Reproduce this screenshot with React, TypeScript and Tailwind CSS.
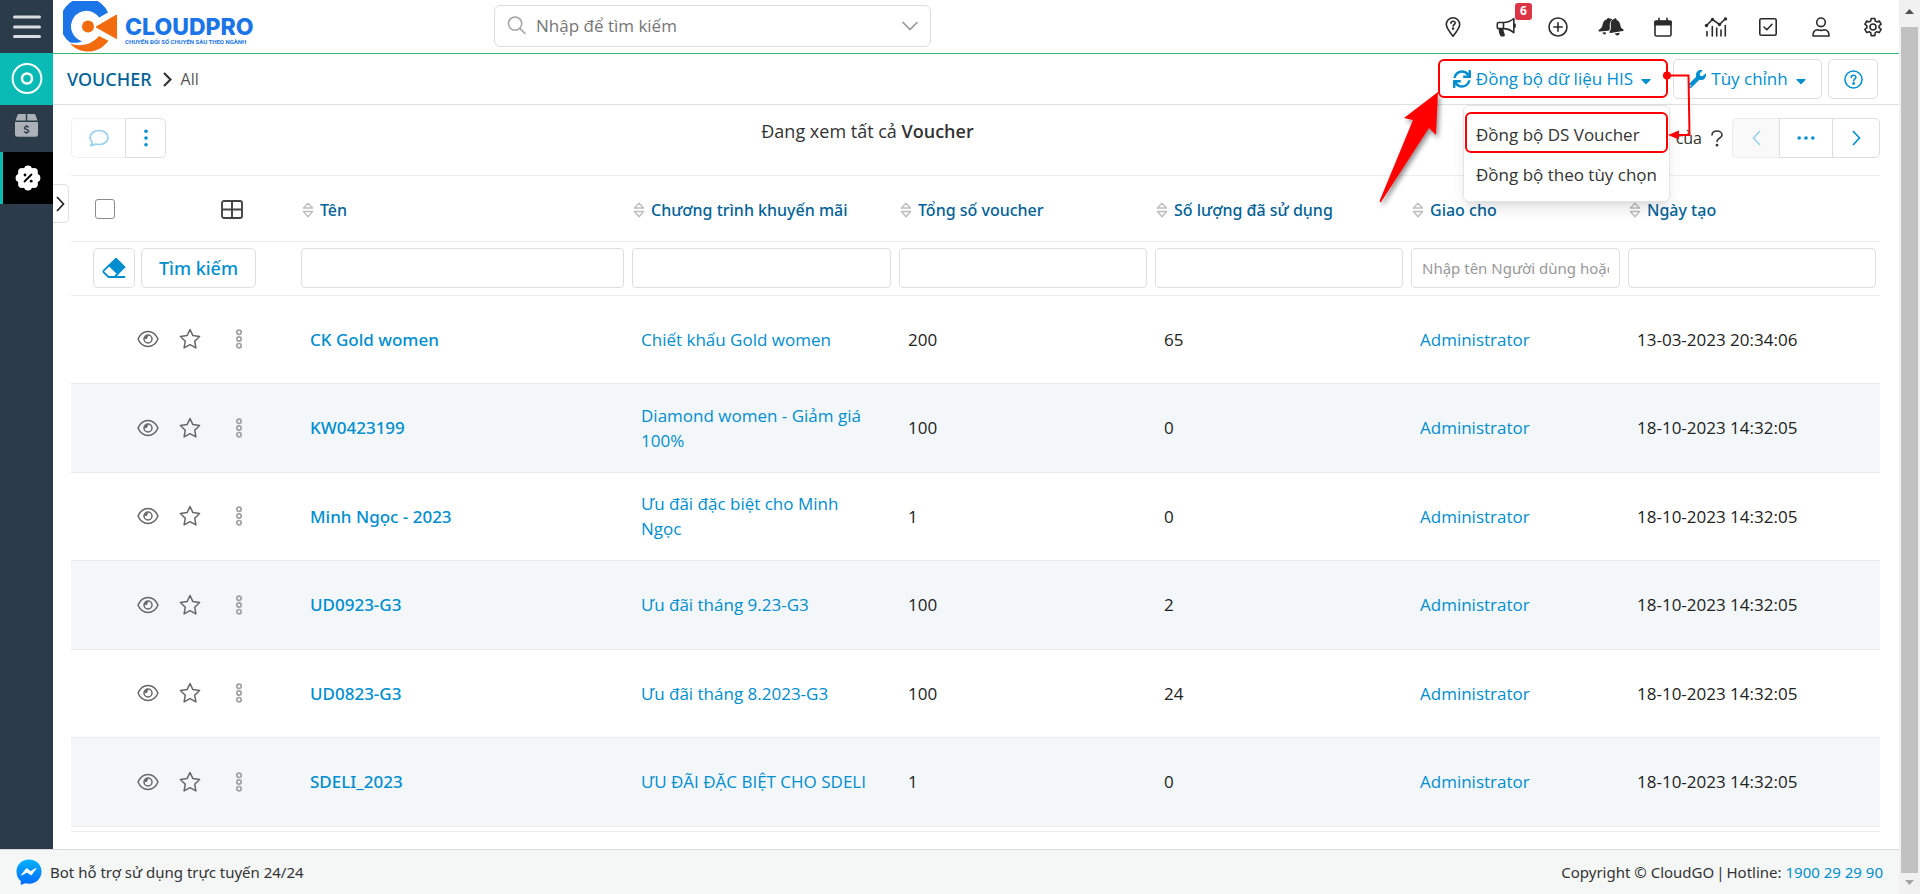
import type { ReactNode } from 'react';
import { FaCaretDown, FaSync, FaWrench } from 'react-icons/fa';

type Voucher = {
  name: string;
  program: string;
  total: number;
  used: number;
  owner: string;
  created: string;
};

const vouchers: Voucher[] = [
  { name: 'CK Gold women', program: 'Chiết khấu Gold women', total: 200, used: 65, owner: 'Administrator', created: '13-03-2023 20:34:06' },
  { name: 'KW0423199', program: 'Diamond women - Giảm giá 100%', total: 100, used: 0, owner: 'Administrator', created: '18-10-2023 14:32:05' },
  { name: 'Minh Ngọc - 2023', program: 'Ưu đãi đặc biệt cho Minh Ngọc', total: 1, used: 0, owner: 'Administrator', created: '18-10-2023 14:32:05' },
  { name: 'UD0923-G3', program: 'Ưu đãi tháng 9.23-G3', total: 100, used: 2, owner: 'Administrator', created: '18-10-2023 14:32:05' },
  { name: 'UD0823-G3', program: 'Ưu đãi tháng 8.2023-G3', total: 100, used: 24, owner: 'Administrator', created: '18-10-2023 14:32:05' },
  { name: 'SDELI_2023', program: 'ƯU ĐÃI ĐẶC BIỆT CHO SDELI', total: 1, used: 0, owner: 'Administrator', created: '18-10-2023 14:32:05' },
];

const columns = [
  { label: 'Tên', width: 'w-[331px]', placeholder: '' },
  { label: 'Chương trình khuyến mãi', width: 'w-[267px]', placeholder: '' },
  { label: 'Tổng số voucher', width: 'w-[256px]', placeholder: '' },
  { label: 'Số lượng đã sử dụng', width: 'w-[256px]', placeholder: '' },
  { label: 'Giao cho', width: 'w-[217px]', placeholder: 'Nhập tên Người dùng hoặc nhóm' },
  { label: 'Ngày tạo', width: 'w-[256px]', placeholder: '' },
];

function Icon({ size = 20, stroke = 1.6, className = '', children }: { size?: number; stroke?: number; className?: string; children: ReactNode }) {
  return (
    <svg width={size} height={size} viewBox="0 0 20 20" fill="none" stroke="currentColor" strokeWidth={stroke} strokeLinecap="round" strokeLinejoin="round" className={className} aria-hidden="true">
      {children}
    </svg>
  );
}

const headerActions: { label: string; badge?: string; icon: ReactNode }[] = [
  {
    label: 'Trợ giúp địa điểm',
    icon: (
      <Icon>
        <path d="M10 19.2C6 14.2 3.3 10.800 3.300 7.500a6.700 6.700 0 0 1 13.400 0C16.700 10.800 14 14.200 10 19.200Z" />
        <path d="M7.900 6.200c.2-2.700 4.500-2.500 4.300 0-.1 1.400-2.100 1.400-2.100 2.900" />
        <circle cx="10.100" cy="11.600" r=".5" fill="currentColor" />
      </Icon>
    ),
  },
  {
    label: 'Thông báo chung',
    badge: '6',
    icon: (
      <Icon>
        <path d="M7.500 5.500H2.500a1.200 1.200 0 0 0-1.200 1.200v3.700a1.200 1.200 0 0 0 1.200 1.200h5M7.500 5.500v6.100M7.500 5.500c4 0 7.500-1.500 10.300-4v14.200c-2.800-2.600-6.300-4.100-10.300-4.100M19 7.200v2.800" />
        <path d="M3.500 11.800h3.200c-.2 2.300.4 4.200 1.300 5.800.2.500 0 1-.5 1H5.200c-1.400-2-1.900-4.300-1.700-6.800Z" fill="currentColor" />
      </Icon>
    ),
  },
  {
    label: 'Thêm nhanh',
    icon: (
      <Icon>
        <circle cx="10" cy="10" r="9" />
        <path d="M10 5.800v8.400M5.800 10h8.400" />
      </Icon>
    ),
  },
  {
    label: 'Thông báo',
    icon: (
      <svg width="26" height="20" viewBox="0 0 26 20" fill="currentColor" aria-hidden="true">
        <path d="M11.500 1.500 11 1.200C9.800.9 9.300 1.300 9 2.200 5.700 3.300 4.800 6 4.400 8.500 4.100 10.600 2.600 11.800.8 13c-.7.600-.4 1.600.5 1.500l9.300-.7c2.300-1.700.8-4.300 1.200-7 .3-1.900 1.200-3.300 2.600-4.300a6.500 6.500 0 0 0-2.900-1Z" />
        <path d="M16.200 2.100c.4-.9 1.200-1.100 2-.5l.3 1.100c3 1.400 3.700 4 4 6.200.2 1.500 1.400 2.500 2.700 3.400.8.600.5 1.600-.4 1.700L12.500 16c-.9.100-1.400-.9-.8-1.600 1.700-2.100 1.200-4.500 1-6.900-.2-2.600 1-4.600 3.500-5.400Z" />
        <path d="M4.300 15.600 7.900 15.300c.3 1.600-.4 2.100-1.300 2.100-1 0-2-.6-2.300-1.800ZM16.800 16.600l4.800-.9c.2 2.900-3.300 4-4.800.9Z" />
      </svg>
    ),
  },
  {
    label: 'Lịch',
    icon: (
      <Icon>
        <rect x="2" y="4" width="16" height="15" rx="1.500" />
        <path d="M2 4.500h16v3.200H2Z" fill="currentColor" />
        <path d="M6 1.300V4M14 1.300V4" />
      </Icon>
    ),
  },
  {
    label: 'Báo cáo',
    icon: (
      <svg width="24" height="20" viewBox="0 0 24 20" fill="none" stroke="currentColor" strokeWidth="1.600" strokeLinecap="round" aria-hidden="true">
        <path d="m2.500 8.500 6-6 7 5 6-6" />
        <path d="M3 14.500V19M8.300 9.500V19M12.700 11V19M17 13V19M21.300 8.500V19" />
        <g fill="currentColor" stroke="none">
          <circle cx="2.500" cy="8.500" r="1.700" />
          <circle cx="8.500" cy="2.500" r="1.700" />
          <circle cx="15.500" cy="7.500" r="1.700" />
          <circle cx="21.500" cy="1.900" r="1.700" />
        </g>
      </svg>
    ),
  },
  {
    label: 'Công việc',
    icon: (
      <Icon>
        <rect x="1.800" y="1.800" width="16.400" height="16.400" rx="1.500" />
        <path d="m6 10 2.800 2.800 5.200-5.500" />
      </Icon>
    ),
  },
  {
    label: 'Tài khoản',
    icon: (
      <Icon>
        <circle cx="10" cy="5.300" r="4.300" />
        <path d="M2 19c-.2-4 1.500-6.200 4.700-6.200 2.200.8 4.400.8 6.600 0 3.200 0 4.900 2.200 4.700 6.200Z" />
      </Icon>
    ),
  },
  {
    label: 'Cài đặt',
    icon: (
      <Icon>
        <path d="M8.200 1.200h3.600l.5 2.500 1.500.9 2.400-.9 1.900 3.200-2 1.700v1.800l2 1.700-1.900 3.200-2.400-.9-1.500.9-.5 3H8.200l-.5-3-1.500-.9-2.400.9-1.900-3.200 2-1.700V8.600l-2-1.700 1.900-3.200 2.400.9 1.500-.9Z" transform="translate(0 .3)" />
        <circle cx="10" cy="10" r="3" />
      </Icon>
    ),
  },
];

function Logo() {
  return (
    <a href="#home" className="flex items-center gap-2 text-[#1b74e8]">
      <svg width="54" height="51" viewBox="0 0 54 51" aria-hidden="true">
        <path d="M45 11.500A25 25 0 1 0 7 41.500c4 .6 9 .5 12-1.300A15.500 15.500 0 1 1 36.200 16.500Z" fill="#1b74e8" />
        <path d="M7 42.500c11 3.800 21.500 1.200 29-7.500l9.500 4.800C35 54 17 53.500 7 42.500Z" fill="#f26c0d" />
        <circle cx="25" cy="25.500" r="6" fill="#f26c0d" />
        <path d="M33 26 53.500 14v23.500Z" fill="#f26c0d" stroke="#f26c0d" strokeLinejoin="round" />
      </svg>
      <span className="flex flex-col pt-2">
        <span className="font-['Inter',sans-serif] text-[23px] font-extrabold leading-[22px]">CLOUDPRO</span>
        <span className="whitespace-nowrap font-['Roboto',sans-serif] text-[6px] font-bold leading-[8px]">CHUYỂN ĐỔI SỐ CHUYÊN SÂU THEO NGÀNH</span>
      </span>
    </a>
  );
}

function Header() {
  return (
    <header className="flex h-[54px] items-center border-b border-[#3cb371] bg-white pl-[10px] pr-[6px]">
      <div className="w-[431px] shrink-0">
        <Logo />
      </div>
      <div className="mb-[2px] flex h-[42px] w-[437px] items-center rounded-md border border-[#dedede] px-3">
        <Icon className="text-[#a3a3a3]" size={19}>
          <circle cx="8.500" cy="8" r="7" />
          <path d="m13.500 13 5.500 5.500" />
        </Icon>
        <input aria-label="Tìm kiếm" placeholder="Nhập để tìm kiếm" className="ml-[10px] min-w-0 flex-1 bg-transparent text-[17px] outline-none placeholder:text-[#757575]" />
        <button aria-label="Mở rộng tìm kiếm" className="text-[#999]">
          <svg width="16" height="10" viewBox="0 0 16 10" fill="none" stroke="currentColor" strokeWidth="1.700" strokeLinecap="round" aria-hidden="true">
            <path d="m1 1.500 7 7 7-7" />
          </svg>
        </button>
      </div>
      <nav className="ml-auto flex gap-[12px] text-[#2b2b2b]">
        {headerActions.map((action) => (
          <button key={action.label} aria-label={action.label} className="relative flex h-8 w-[40px] items-center justify-center even:w-[41px]">
            {action.icon}
            {action.badge && (
              <span className="absolute -top-[8px] left-[30px] flex h-[17px] w-[17px] items-center justify-center rounded-[3px] bg-[#dc3545] text-[12px] font-bold text-white">{action.badge}</span>
            )}
          </button>
        ))}
      </nav>
    </header>
  );
}

function Sidebar() {
  return (
    <aside className="flex w-[53px] shrink-0 flex-col bg-[#2c3b49]">
      <button aria-label="Menu" className="flex h-[53px] items-center justify-center">
        <svg width="28" height="24" viewBox="0 0 28 24" stroke="#d9dce0" strokeWidth="3" strokeLinecap="round" aria-hidden="true">
          <path d="M1.500 2h25M1.500 12h25M1.500 21.500h25" />
        </svg>
      </button>
      <a href="#dashboard" aria-label="Tổng quan" className="flex h-[52px] items-center justify-center bg-[#0abab5] text-white">
        <svg width="32" height="32" viewBox="0 0 32 32" fill="none" stroke="currentColor" aria-hidden="true">
          <circle cx="16" cy="15.500" r="14.400" strokeWidth="2" />
          <circle cx="16" cy="15.500" r="5" strokeWidth="2.500" />
        </svg>
      </a>
      <a href="#products" aria-label="Sản phẩm" className="flex h-[47px] items-center justify-center pb-[6px]">
        <svg width="23" height="23" viewBox="0 0 23 23" aria-hidden="true">
          <path d="M4 0h6.800v6.500H.5L2.500 1.100C2.800.4 3.300 0 4 0ZM12.200 0H19c.7 0 1.200.4 1.500 1.100l2 5.400H12.200ZM0 8h23v12.500a2.300 2.300 0 0 1-2.300 2.300H2.300A2.300 2.300 0 0 1 0 20.500Z" fill="#abb1b6" />
          <path d="M13.500 13.300c-1-1.100-4.200-1-4.200.7 0 1.900 4.400.9 4.400 3 0 1.900-3.500 1.900-4.500.6M11.500 11v1.200M11.500 18.500v1.200" stroke="#2c3b49" strokeWidth="1.400" fill="none" />
        </svg>
      </a>
      <a href="#vouchers" aria-label="Voucher" className="flex h-[52px] items-center justify-center border-l-[3px] border-[#0abab5] bg-black">
        <svg width="26" height="26" viewBox="0 0 26 26" aria-hidden="true">
          <g fill="white">
            <circle cx="13" cy="13" r="10.500" />
            <circle cx="13" cy="4.500" r="3.900" />
            <circle cx="13" cy="21.500" r="3.900" />
            <circle cx="4.500" cy="13" r="3.900" />
            <circle cx="21.500" cy="13" r="3.900" />
            <circle cx="7" cy="7" r="3.900" />
            <circle cx="19" cy="7" r="3.900" />
            <circle cx="7" cy="19" r="3.900" />
            <circle cx="19" cy="19" r="3.900" />
          </g>
          <path d="m9.500 16.500 7-7" stroke="black" strokeWidth="1.800" strokeLinecap="round" />
          <circle cx="10" cy="10" r="1.400" fill="black" />
          <circle cx="16.200" cy="16.200" r="1.400" fill="black" />
        </svg>
      </a>
    </aside>
  );
}

function Callouts() {
  return (
    <svg className="pointer-events-none absolute -left-[69px] -top-[10px] z-30" width="330" height="170" viewBox="1370 49 330 170" aria-hidden="true">
      <defs>
        <filter id="arrow-shadow" x="-20%" y="-20%" width="150%" height="150%">
          <feDropShadow dx="2" dy="3" stdDeviation="2.500" floodColor="#000" floodOpacity="0.450" />
        </filter>
      </defs>
      <path d="M1439 92 1437 135 1430 128 1382 202Q1380 203 1381 200L1414 120 1405 118Z" fill="#fe0000" filter="url(#arrow-shadow)" />
      <g fill="none" stroke="#fe0000" strokeWidth="2">
        <rect x="1440" y="60" width="228" height="37" rx="5" />
        <rect x="1467" y="113" width="201" height="39" rx="5" />
        <path d="M1668 75.500h21.500l1 59.500H1679" />
      </g>
      <circle cx="1668" cy="75.500" r="4" fill="#fe0000" />
      <path d="m1669 135 11-4.500v9Z" fill="#fe0000" />
    </svg>
  );
}

const menuItem = 'block w-full whitespace-nowrap px-[12px] text-left text-[17px] leading-[40px] text-[#333]';

function PageBar() {
  return (
    <div className="flex h-[51px] items-center border-b border-[#dedede] pl-[14px] pr-[21px]">
      <h1 className="font-['Noto_Sans',sans-serif] text-[18px] font-medium text-[#026297]">VOUCHER</h1>
      <svg width="9" height="15" viewBox="0 0 9 15" fill="none" stroke="#333" strokeWidth="2.200" className="ml-[11px] mr-[9px]" aria-hidden="true">
        <path d="m1 1 6.500 6.500L1 14" />
      </svg>
      <span className="text-[16px] text-[#555]">All</span>
      <div className="ml-auto flex gap-[6px] text-[#008ecf]">
        <div className="relative">
          <button className="flex h-[40px] w-[229px] items-center justify-center gap-[5px] whitespace-nowrap pl-[2px] text-[17px]" aria-expanded="true">
            <FaSync className="text-[18px]" />
            Đồng bộ dữ liệu HIS
            <FaCaretDown className="mt-1 text-[16px]" />
          </button>
          <div role="menu" className="absolute left-[25px] top-[46px] z-20 w-[207px] rounded-md border border-[#e4e4e4] bg-white pb-[6px] pt-[9px] shadow-lg">
            <button role="menuitem" className={menuItem}>Đồng bộ DS Voucher</button>
            <button role="menuitem" className={menuItem}>Đồng bộ theo tùy chọn</button>
          </div>
          <Callouts />
        </div>
        <button className="flex h-[40px] w-[149px] items-center justify-center gap-[5px] whitespace-nowrap rounded-[5px] border border-[#dedede] pl-[2px] text-[17px]">
          <FaWrench className="text-[18px]" />
          Tùy chỉnh
          <FaCaretDown className="mt-1 text-[16px]" />
        </button>
        <button aria-label="Hướng dẫn" className="flex h-[40px] w-[50px] items-center justify-center rounded-[5px] border border-[#dedede]">
          <Icon size={19}>
            <circle cx="10" cy="10" r="9" />
            <path d="M7.500 7.800c.2-3.300 5.200-3 5 0-.1 1.700-2.400 1.800-2.400 3.600" />
            <circle cx="10.100" cy="14.200" r=".7" fill="currentColor" />
          </Icon>
        </button>
      </div>
    </div>
  );
}

function Toolbar() {
  return (
    <div className="grid h-[71px] grid-cols-3 border-b border-[#ececec] pt-[13px]">
      <div className="flex">
        <button disabled aria-label="Bình luận" className="flex h-[40px] w-[54px] items-center justify-center rounded-l-[5px] border border-r-0 border-[#f0f0f0] text-[#99d2ec]">
          <Icon size={20} stroke={1.7}>
            <path d="M3.300 14.200A7.500 6.700 0 0 1 1 9.500C1 5.600 5 2.500 10 2.500s9 3.100 9 7-4 7-9 7c-1.300 0-2.500-.2-3.600-.5-1.500 1-3.100 1.500-4.900 1.400 1-.9 1.600-1.900 1.800-3.200Z" />
          </Icon>
        </button>
        <button aria-label="Thao tác khác" className="flex h-[40px] w-[41px] items-center justify-center rounded-r-[5px] border border-[#dedede] text-[#008ecf]">
          <svg width="4" height="18" viewBox="0 0 4 18" fill="currentColor" aria-hidden="true">
            <circle cx="2" cy="2.200" r="1.800" />
            <circle cx="2" cy="9" r="1.800" />
            <circle cx="2" cy="15.800" r="1.800" />
          </svg>
        </button>
      </div>
      <p className="whitespace-nowrap pr-[216px] text-center text-[18px] leading-[26px] text-[#333]">
        Đang xem tất cả <strong className="font-semibold">Voucher</strong>
      </p>
      <div className="flex justify-end text-[#008ecf]">
        <span className="mr-[9px] flex h-[40px] items-center gap-[9px] text-[#333]">
          <span className="text-[16px]">của</span>
          <svg width="12" height="17" viewBox="0 0 12 17" fill="none" stroke="currentColor" strokeWidth="1.600" strokeLinecap="round" aria-hidden="true">
            <path d="M1 5c0-5.500 10-5.200 10 0 0 3-5 3.300-5 6.500" />
            <circle cx="6" cy="15.200" r=".6" fill="currentColor" />
          </svg>
        </span>
        <button disabled aria-label="Trang trước" className="flex h-[40px] w-[47px] items-center justify-center rounded-l-[5px] border border-r-0 border-[#ececec] bg-[#f9f9f9] text-[#99d2ec]">
          <svg width="9" height="16" viewBox="0 0 9 16" fill="none" stroke="currentColor" strokeWidth="1.600" aria-hidden="true">
            <path d="M8 1 1.500 8 8 15" />
          </svg>
        </button>
        <button aria-label="Chọn trang" className="flex h-[40px] w-[54px] items-center justify-center border border-[#dedede]">
          <svg width="18" height="4" viewBox="0 0 18 4" fill="currentColor" aria-hidden="true">
            <circle cx="2.200" cy="2" r="1.800" />
            <circle cx="9" cy="2" r="1.800" />
            <circle cx="15.800" cy="2" r="1.800" />
          </svg>
        </button>
        <button aria-label="Trang sau" className="flex h-[40px] w-[47px] items-center justify-center rounded-r-[5px] border border-l-0 border-[#dedede]">
          <svg width="9" height="16" viewBox="0 0 9 16" fill="none" stroke="currentColor" strokeWidth="1.600" aria-hidden="true">
            <path d="m1 1 6.500 7L1 15" />
          </svg>
        </button>
      </div>
    </div>
  );
}

function SortIcon() {
  return (
    <svg width="12" height="16" viewBox="0 0 12 16" fill="none" stroke="#bdbdbd" strokeWidth="1.300" strokeLinejoin="round" aria-hidden="true">
      <path d="M6 1.300 10.600 6H1.400ZM6 14.700 1.400 9.500h9.200Z" />
    </svg>
  );
}

function RowActions() {
  return (
    <div className="flex items-center pl-[66px] text-[#666]">
      <button aria-label="Xem nhanh">
        <svg width="22" height="18" viewBox="0 0 22 18" fill="none" stroke="currentColor" strokeWidth="1.500" aria-hidden="true">
          <path d="M1 9C5.500-1 16.500-1 21 9 16.500 19 5.500 19 1 9Z" strokeLinejoin="round" />
          <circle cx="11" cy="9" r="4" />
          <path d="M11 5.500A3.500 3.500 0 0 0 7.500 9c1.900.5 3.500-.7 3.500-3.500Z" fill="currentColor" stroke="none" />
        </svg>
      </button>
      <button aria-label="Đánh dấu" className="ml-5">
        <svg width="22" height="22" viewBox="0 0 22 22" fill="none" stroke="currentColor" strokeWidth="1.500" strokeLinejoin="round" aria-hidden="true">
          <path d="m11 1.500 2.900 6.100 6.700.9-4.900 4.700 1.200 6.700-5.900-3.200-5.900 3.200 1.200-6.700L1.400 8.500l6.700-.9Z" />
        </svg>
      </button>
      <button aria-label="Thêm thao tác" className="ml-[34px] text-[#a0a0a0]">
        <svg width="8" height="20" viewBox="0 0 8 20" fill="none" stroke="currentColor" strokeWidth="1.700" aria-hidden="true">
          <circle cx="4" cy="3.300" r="2.200" />
          <circle cx="4" cy="10" r="2.200" />
          <circle cx="4" cy="16.700" r="2.200" />
        </svg>
      </button>
    </div>
  );
}

function VoucherTable() {
  return (
    <div className="border-b border-[#ececec] pb-1">
      <table className="w-full table-fixed border-collapse text-left text-[17px] leading-[25px]">
        <thead className="font-['Noto_Sans',sans-serif]">
          <tr className="h-[65px] border-b border-[#ececec]">
            <th className="w-[226px] p-0 pt-[2px]">
              <div className="flex items-center pl-6">
                <input type="checkbox" aria-label="Chọn tất cả" className="h-5 w-5 appearance-none rounded-[3px] border border-[#8c8c8c] bg-white" />
                <button aria-label="Tùy chỉnh cột" className="ml-[106px] text-[#444]">
                  <svg width="22" height="19" viewBox="0 0 22 19" fill="none" stroke="currentColor" strokeWidth="1.900" aria-hidden="true">
                    <rect x="1" y="1" width="20" height="17" rx="2" />
                    <path d="M1 9.500h20M11 1v17" />
                  </svg>
                </button>
              </div>
            </th>
            {columns.map((column) => (
              <th key={column.label} className={`${column.width} p-0 pl-[5px] pt-[4px] font-normal`}>
                <button className="flex items-center gap-[6px] whitespace-nowrap text-[16px] font-medium text-[#026297]">
                  <SortIcon />
                  {column.label}
                </button>
              </th>
            ))}
          </tr>
          <tr className="h-[54px] border-b border-[#ececec]">
            <td className="p-0">
              <div className="flex gap-[6px] pl-[22px] text-[#008ecf]">
                <button aria-label="Xóa bộ lọc" className="flex h-[40px] w-[42px] items-center justify-center rounded-[5px] border border-[#dedede]">
                  <svg width="24" height="22" viewBox="0 0 24 22" fill="none" stroke="currentColor" strokeWidth="1.800" strokeLinejoin="round" strokeLinecap="round" aria-hidden="true">
                    <path d="m7 8.500-5.300 5.200a1.200 1.200 0 0 0 0 1.700L6.500 20H22.500M12.500 20l3.500-3.500" />
                    <path d="m14 1.600 8.500 8.500-6.700 6.600L7.200 8.300Z" fill="currentColor" />
                  </svg>
                </button>
                <button className="h-[40px] w-[115px] rounded-[5px] border border-[#dedede] text-[18px] font-medium">Tìm kiếm</button>
              </div>
            </td>
            {columns.map((column) => (
              <td key={column.label} className="px-1 py-0">
                <input aria-label={column.label} placeholder={column.placeholder} className="block h-[40px] w-full rounded-[4px] border border-[#dedede] bg-white px-[10px] text-[15px] outline-none placeholder:text-[#999]" />
              </td>
            ))}
          </tr>
        </thead>
        <tbody className="text-[#222]">
          {vouchers.map((voucher) => (
            <tr key={voucher.name} className="h-[88px] border-b border-[#e9ebed] even:h-[89px] even:bg-[#f3f7fa]">
              <td className="p-0">
                <RowActions />
              </td>
              <td className="px-[13px] py-0">
                <a href="#voucher" className="font-['Noto_Sans',sans-serif] font-medium text-[#008ecf]">{voucher.name}</a>
              </td>
              <td className="px-[13px] py-0">
                <a href="#program" className="text-[#008ecf]">{voucher.program}</a>
              </td>
              <td className="px-[13px] py-0">{voucher.total}</td>
              <td className="px-[13px] py-0">{voucher.used}</td>
              <td className="px-[13px] py-0">
                <a href="#owner" className="text-[#008ecf]">{voucher.owner}</a>
              </td>
              <td className="whitespace-nowrap px-[13px] py-0">{voucher.created}</td>
            </tr>
          ))}
        </tbody>
      </table>
    </div>
  );
}

function Footer() {
  return (
    <footer className="flex h-[45px] items-center justify-between border-t border-[#d9dcdc] bg-[#f5f7f7] pl-4 pr-[16px] font-['Noto_Sans',sans-serif] text-[15px] text-[#333]">
      <a href="#bot" className="flex items-center gap-[8px]">
        <svg width="26" height="26" viewBox="0 0 26 26" aria-hidden="true">
          <defs>
            <linearGradient id="chat" x1="0" y1="0" x2="0" y2="1">
              <stop offset="0" stopColor="#00b2ff" />
              <stop offset="1" stopColor="#006aff" />
            </linearGradient>
          </defs>
          <path d="M13 .5C20.200.5 25.500 5.700 25.500 12.500S20.200 24.700 13 24.700c-1.300 0-2.600-.2-3.800-.5L4.800 26v-4C2.100 19.800.5 16.500.5 12.500.5 5.700 5.800.5 13 .5Z" fill="url(#chat)" />
          <path d="m5.500 16 5-6.500 4 3 5.500-3-4.800 6.500-4.200-3Z" fill="white" stroke="white" strokeLinejoin="round" />
        </svg>
        Bot hỗ trợ sử dụng trực tuyến 24/24
      </a>
      <p>
        Copyright © CloudGO<span className="mx-[2px]">|</span>Hotline: <a href="tel:1900292990" className="text-[#008ecf]">1900 29 29 90</a>
      </p>
    </footer>
  );
}

function ScrollBar() {
  return (
    <div className="flex w-[21px] shrink-0 flex-col items-center bg-[#f1f1f1]" aria-hidden="true">
      <svg width="9" height="27" viewBox="0 0 9 27" className="shrink-0">
        <path d="M0 14 4.500 9 9 14Z" fill="#505050" />
      </svg>
      <div className="w-[17px] flex-1 bg-[#c1c1c1]" />
      <svg width="9" height="21" viewBox="0 0 9 21" className="shrink-0">
        <path d="M0 7h9l-4.500 5Z" fill="#a3a3a3" />
      </svg>
    </div>
  );
}

export default function App() {
  return (
    <div className="flex min-h-screen bg-white font-['Open_Sans','Noto_Sans',sans-serif]">
      <div className="flex min-w-0 flex-1 flex-col">
        <div className="flex flex-1">
          <Sidebar />
          <div className="min-w-0 flex-1">
            <Header />
            <PageBar />
            <main className="relative pl-[18px] pr-[19px]">
              <button aria-label="Mở bảng bên" className="absolute left-0 top-[79px] flex h-[39px] w-[16px] items-center justify-center rounded-r-[5px] border border-l-0 border-[#dedede]">
                <svg width="9" height="16" viewBox="0 0 9 16" fill="none" stroke="#222" strokeWidth="1.700" aria-hidden="true">
                  <path d="m1 1 6.500 7L1 15" />
                </svg>
              </button>
              <Toolbar />
              <VoucherTable />
            </main>
          </div>
        </div>
        <Footer />
      </div>
      <ScrollBar />
    </div>
  );
}
